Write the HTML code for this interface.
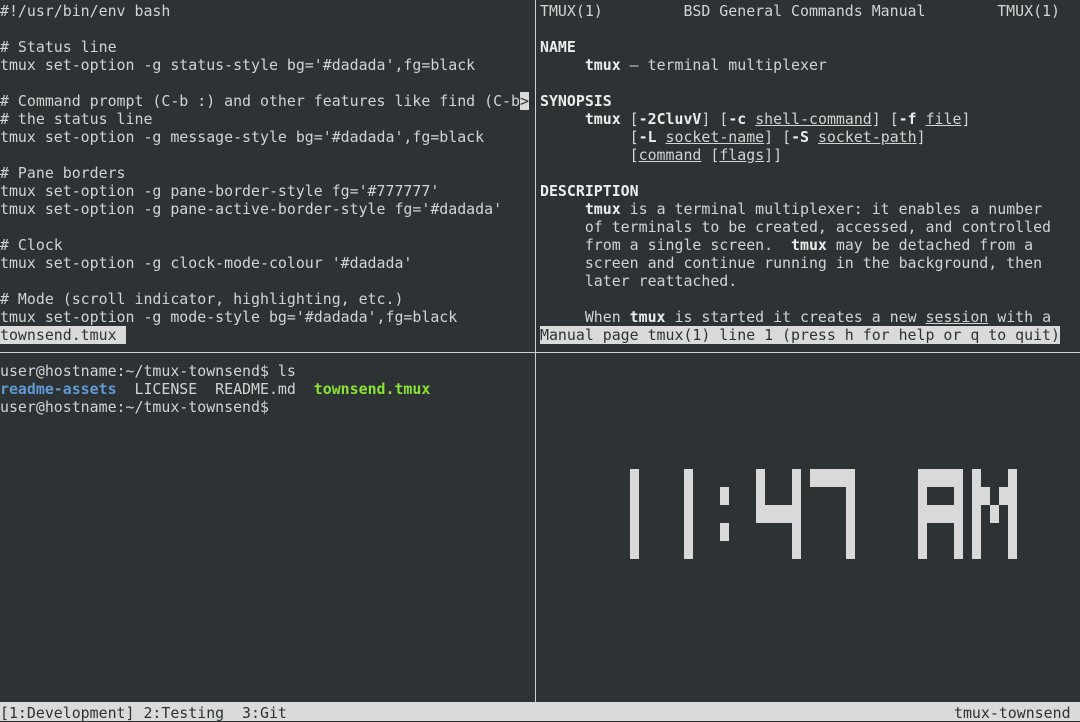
<!DOCTYPE html>
<html><head><meta charset="utf-8">
<style>
html,body{margin:0;padding:0;background:#2d3235;width:1080px;height:721px;overflow:hidden}
.p{position:absolute;white-space:pre;font-family:"DejaVu Sans Mono","Liberation Mono",monospace;font-size:14.9px;line-height:18px;color:#d3d3d3}
b{font-weight:bold;color:#ececec}
u{text-decoration:underline}
.hl{background:#dadada;color:#2d3235}
.bl{color:#5f9ad3;font-weight:bold}
.gr{color:#8ae234;font-weight:bold}
.blk{position:absolute;background:#d9d9d9}
</style></head><body>
<div class="p" style="left:0;top:2px">#!/usr/bin/env bash

# Status line
tmux set-option -g status-style bg='#dadada',fg=black

# Command prompt (C-b :) and other features like find (C-b<span class="hl">&gt;</span>
# the status line
tmux set-option -g message-style bg='#dadada',fg=black

# Pane borders
tmux set-option -g pane-border-style fg='#777777'
tmux set-option -g pane-active-border-style fg='#dadada'

# Clock
tmux set-option -g clock-mode-colour '#dadada'

# Mode (scroll indicator, highlighting, etc.)
tmux set-option -g mode-style bg='#dadada',fg=black
<span class="hl">townsend.tmux </span></div>

<div class="p" style="left:540px;top:2px">TMUX(1)         BSD General Commands Manual        TMUX(1)

<b>NAME</b>
     <b>tmux</b> – terminal multiplexer

<b>SYNOPSIS</b>
     <b>tmux</b> [<b>-2CluvV</b>] [<b>-c</b> <u>shell-command</u>] [<b>-f</b> <u>file</u>]
          [<b>-L</b> <u>socket-name</u>] [<b>-S</b> <u>socket-path</u>]
          [<u>command</u> [<u>flags</u>]]

<b>DESCRIPTION</b>
     <b>tmux</b> is a terminal multiplexer: it enables a number
     of terminals to be created, accessed, and controlled
     from a single screen.  <b>tmux</b> may be detached from a
     screen and continue running in the background, then
     later reattached.

     When <b>tmux</b> is started it creates a new <u>session</u> with a
<span class="hl">Manual page tmux(1) line 1 (press h for help or q to quit)</span></div>

<div class="p" style="left:0;top:362px">user@hostname:~/tmux-townsend$ ls
<span class="bl">readme-assets</span>  LICENSE  README.md  <span class="gr">townsend.tmux</span>
user@hostname:~/tmux-townsend$</div>

<div style="position:absolute;left:535px;top:0;width:1px;height:702px;background:#cfcfcf"></div>
<div style="position:absolute;left:0;top:352px;width:1080px;height:1px;background:#cfcfcf"></div>

<div class="blk" style="left:630px;top:469px;width:9px;height:90px"></div>
<div class="blk" style="left:684px;top:469px;width:9px;height:90px"></div>
<div class="blk" style="left:720px;top:487px;width:9px;height:18px"></div>
<div class="blk" style="left:720px;top:523px;width:9px;height:18px"></div>
<div class="blk" style="left:756px;top:469px;width:9px;height:54px"></div>
<div class="blk" style="left:756px;top:505px;width:45px;height:18px"></div>
<div class="blk" style="left:792px;top:469px;width:9px;height:90px"></div>
<div class="blk" style="left:810px;top:469px;width:45px;height:18px"></div>
<div class="blk" style="left:846px;top:469px;width:9px;height:90px"></div>
<div class="blk" style="left:918px;top:469px;width:45px;height:18px"></div>
<div class="blk" style="left:918px;top:469px;width:9px;height:90px"></div>
<div class="blk" style="left:954px;top:469px;width:9px;height:90px"></div>
<div class="blk" style="left:918px;top:505px;width:45px;height:18px"></div>
<div class="blk" style="left:972px;top:469px;width:9px;height:90px"></div>
<div class="blk" style="left:1008px;top:469px;width:9px;height:90px"></div>
<div class="blk" style="left:972px;top:487px;width:18px;height:18px"></div>
<div class="blk" style="left:999px;top:487px;width:18px;height:18px"></div>
<div class="blk" style="left:990px;top:505px;width:9px;height:18px"></div>

<div style="position:absolute;left:0;top:702px;width:1080px;height:19px;background:#dadada"></div>
<div class="p" style="left:0;top:704px;color:#2d3235">[1:Development] 2:Testing  3:Git</div>
<div class="p" style="left:954px;top:704px;color:#2d3235">tmux-townsend</div>
</body></html>
